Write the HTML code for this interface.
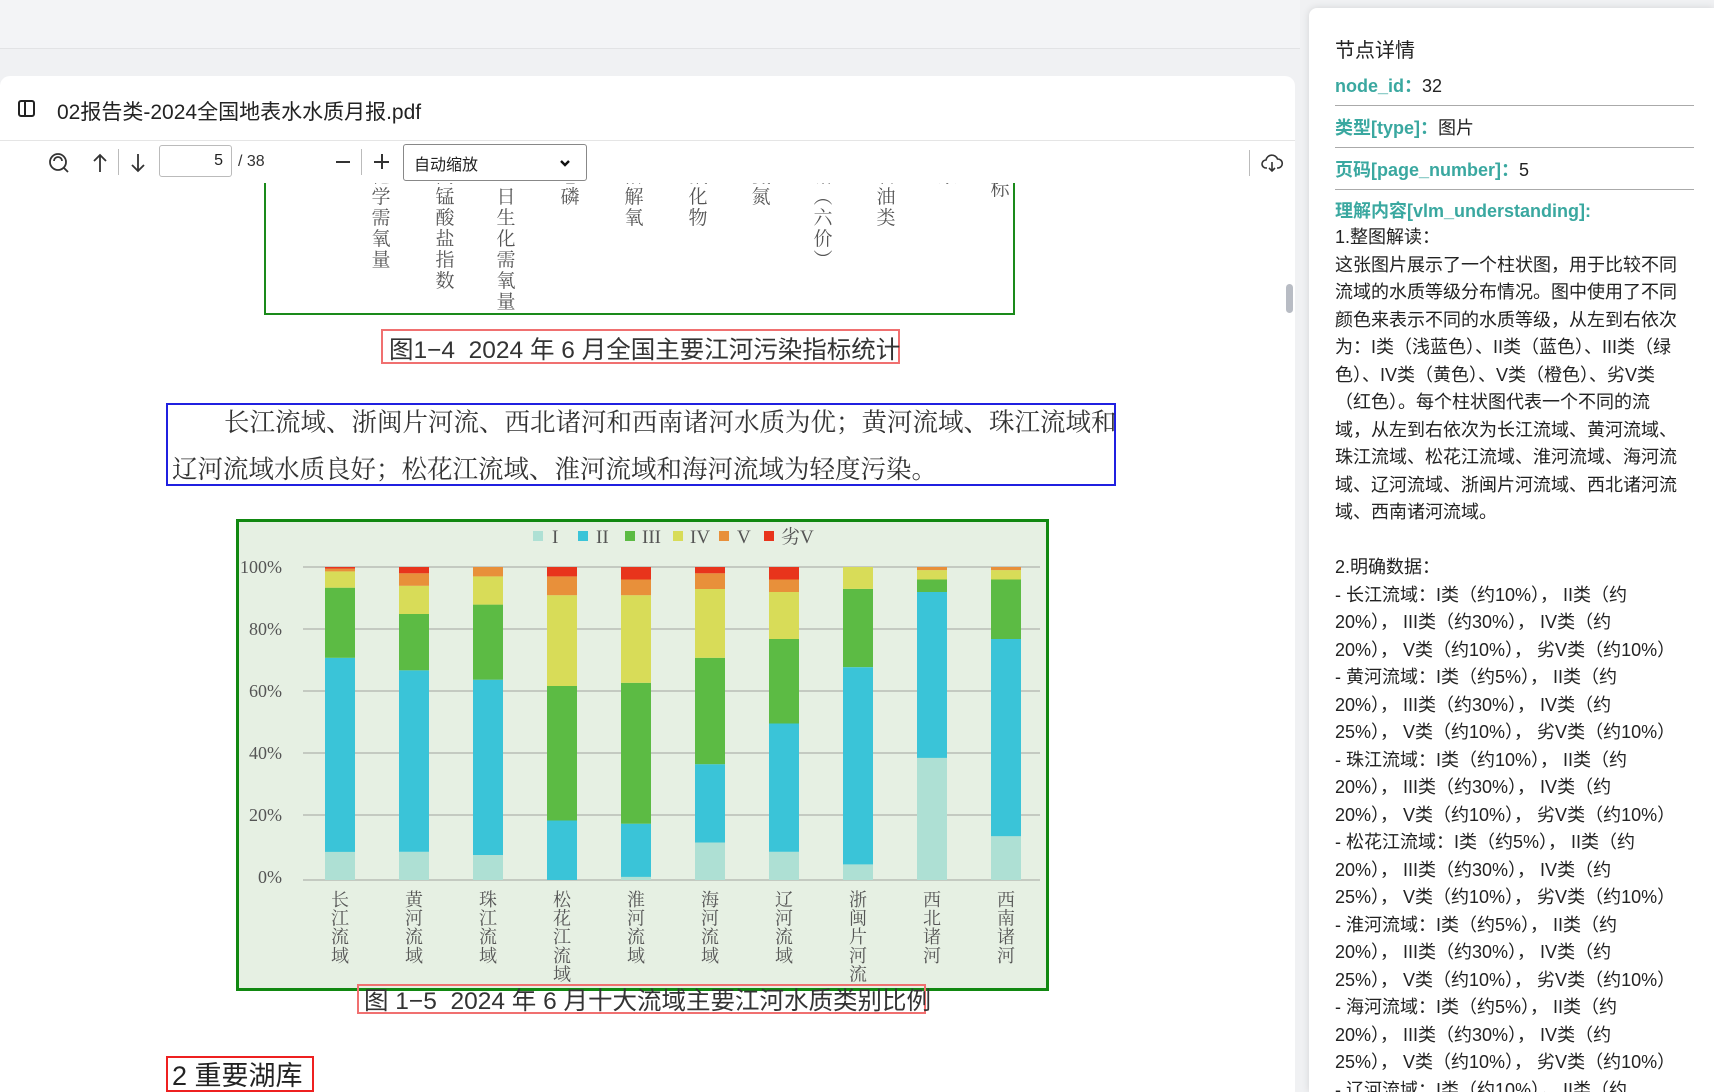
<!DOCTYPE html>
<html style="overflow:hidden;width:1714px;height:1092px"><head><meta charset="utf-8">
<style>
*{margin:0;padding:0;box-sizing:border-box}
body{width:1714px;height:1092px;overflow:hidden;background:#f0f1f3;font-family:"Liberation Sans","Noto Sans CJK SC",sans-serif;position:relative;color:#222}
.abs{position:absolute}
.card{left:0;top:76px;width:1295px;height:1016px;background:#fff;border-top-left-radius:10px;border-top-right-radius:10px}
.serif{font-family:"Liberation Serif","Noto Serif CJK SC",serif}
.vcol{position:absolute;width:24px;text-align:center;font-size:19px;line-height:21px;color:#555;font-family:"Liberation Serif","Noto Serif CJK SC",serif}
.panel{left:1309px;top:8px;width:405px;height:1084px;background:#fff;border-top-left-radius:8px;box-shadow:0 0 8px rgba(0,0,0,.12)}
.pl{position:absolute;left:1335px;font-size:18px;color:#222;white-space:nowrap}
.lbl{color:#3aa8a0;font-weight:bold}
.hr{position:absolute;left:1335px;width:359px;height:1px;background:#aaa}
</style></head><body>
<div class="abs" style="left:0;top:0;width:1300px;height:49px;background:#f3f4f6;border-bottom:1px solid #e2e3e5"></div>
<div class="abs card"></div>
<!-- header -->
<div class="abs" style="left:18px;top:100px;width:17px;height:17px;border:2px solid #222;border-radius:3px"></div>
<div class="abs" style="left:24px;top:100px;width:2px;height:17px;background:#222"></div>
<div class="abs" style="left:57px;top:96px;font-size:21px;color:#222">02报告类-2024全国地表水水质月报.pdf</div>
<div class="abs" style="left:0;top:140px;width:1295px;height:1px;background:#e5e5e5"></div>
<!-- toolbar -->
<svg class="abs" style="left:46px;top:150px" width="26" height="26" viewBox="0 0 26 26" fill="none" stroke="#333" stroke-width="1.8"><circle cx="12" cy="12" r="8"/><path d="M18 18l4 4M8 11a4 4 0 0 1 8 0"/></svg>
<svg class="abs" style="left:90px;top:152px" width="20" height="22" viewBox="0 0 20 22" fill="none" stroke="#333" stroke-width="1.8"><path d="M10 20V3M4 9l6-6 6 6"/></svg>
<div class="abs" style="left:118px;top:149px;width:1px;height:26px;background:#bbb"></div>
<svg class="abs" style="left:128px;top:152px" width="20" height="22" viewBox="0 0 20 22" fill="none" stroke="#333" stroke-width="1.8"><path d="M10 2v17M4 13l6 6 6-6"/></svg>
<div class="abs" style="left:159px;top:145px;width:73px;height:32px;border:1px solid #bbb;border-radius:3px;font-size:16px;text-align:right;padding:6px 8px 0 0">5</div>
<div class="abs" style="left:238px;top:153px;font-size:16px;color:#333">/ 38</div>
<div class="abs" style="left:336px;top:161px;width:14px;height:2px;background:#333"></div>
<div class="abs" style="left:361px;top:149px;width:1px;height:26px;background:#bbb"></div>
<div class="abs" style="left:374px;top:161px;width:15px;height:2px;background:#333"></div>
<div class="abs" style="left:381px;top:154px;width:2px;height:15px;background:#333"></div>
<div class="abs" style="left:403px;top:144px;width:184px;height:37px;border:1px solid #888;border-radius:3px;font-size:16px;padding:6px 0 0 10px">自动缩放</div>
<svg class="abs" style="left:558px;top:157px" width="14" height="12" viewBox="0 0 14 12"><path d="M3 4l4 4 4-4" fill="none" stroke="#111" stroke-width="2.4"/></svg>
<div class="abs" style="left:1249px;top:150px;width:1px;height:26px;background:#bbb"></div>
<svg class="abs" style="left:1260px;top:151px" width="24" height="24" viewBox="0 0 24 24" fill="none" stroke="#333" stroke-width="1.6"><path d="M7 17H6a4 4 0 0 1 0-8 6 6 0 0 1 11.5-1A4.5 4.5 0 0 1 18 17h-1M12 11v9M9 17l3 3 3-3"/></svg>
<div class="abs" style="left:1286px;top:284px;width:7px;height:29px;background:#b8bcc4;border-radius:4px"></div>

<!-- content clip -->
<div class="abs" style="left:0;top:183px;width:1280px;height:132px;overflow:hidden">
 <div class="abs" style="left:264px;top:-20px;width:751px;height:152px;border:2px solid #1a8a1a;border-top:none"></div>
 <div class="vcol" style="left:369px;top:-17px">化<br>学<br>需<br>氧<br>量</div>
 <div class="vcol" style="left:433px;top:-17px">高<br>锰<br>酸<br>盐<br>指<br>数</div>
 <div class="vcol" style="left:494px;top:-17px">五<br>日<br>生<br>化<br>需<br>氧<br>量</div>
 <div class="vcol" style="left:558px;top:-17px">总<br>磷</div>
 <div class="vcol" style="left:622px;top:-17px">溶<br>解<br>氧</div>
 <div class="vcol" style="left:686px;top:-17px">氟<br>化<br>物</div>
 <div class="vcol" style="left:749px;top:-17px">氨<br>氮</div>
 <div class="vcol" style="left:811px;top:-17px">铬<br>︵<br>六<br>价<br>︶</div>
 <div class="vcol" style="left:874px;top:-17px">石<br>油<br>类</div>
 <div class="vcol" style="left:936px;top:-17px">汞</div>
 <div class="vcol" style="left:988px;top:-4px">标</div>
</div>
<div class="abs" style="left:381px;top:329px;width:519px;height:35px;border:2px solid #f07070"></div>
<div class="abs" style="left:389px;top:331px;font-size:24.5px;color:#333;white-space:nowrap">图1−4&nbsp; 2024 年 6 月全国主要江河污染指标统计</div>

<div class="abs" style="left:166px;top:403px;width:950px;height:83px;border:2px solid #2020e0"></div>
<div class="abs serif" style="left:172px;top:399px;width:950px;font-size:25.5px;line-height:47px;color:#333;white-space:nowrap"><div style="padding-left:52px">长江流域、浙闽片河流、西北诸河和西南诸河水质为优；黄河流域、珠江流域和</div><div>辽河流域水质良好；松花江流域、淮河流域和海河流域为轻度污染。</div></div>

<!-- chart -->
<svg class="abs" style="left:236px;top:519px" width="813" height="472" viewBox="236 519 813 472">
<rect x="237.5" y="520.5" width="810" height="469" fill="#e6f0e3" stroke="#118811" stroke-width="3"/>
<g font-family="Liberation Serif,Noto Serif CJK SC,serif" font-size="19" fill="#555">
<rect x="533" y="531" width="10" height="10" fill="#aee0d4"/><text x="552" y="543">I</text>
<rect x="578" y="531" width="10" height="10" fill="#3ac4d8"/><text x="596" y="543">II</text>
<rect x="625" y="531" width="10" height="10" fill="#5cbb44"/><text x="642" y="543">III</text>
<rect x="673" y="531" width="10" height="10" fill="#d8dc58"/><text x="690" y="543">IV</text>
<rect x="719" y="531" width="10" height="10" fill="#e8903a"/><text x="737" y="543">V</text>
<rect x="764" y="531" width="10" height="10" fill="#e8341c"/><text x="781" y="543">劣V</text>
<g text-anchor="end" font-size="18"><text x="282" y="573">100%</text><text x="282" y="635">80%</text><text x="282" y="697">60%</text><text x="282" y="759">40%</text><text x="282" y="821">20%</text><text x="282" y="883">0%</text></g>
</g>
<g stroke="#b8bdb6" stroke-width="1.5"><line x1="303" x2="1040" y1="567" y2="567"/><line x1="303" x2="1040" y1="629" y2="629"/><line x1="303" x2="1040" y1="691" y2="691"/><line x1="303" x2="1040" y1="753" y2="753"/><line x1="303" x2="1040" y1="815" y2="815"/><line x1="303" x2="1040" y1="880" y2="880"/></g>
<g id="bars"></g>
<g font-family="Liberation Serif,Noto Serif CJK SC,serif" font-size="18" fill="#555" text-anchor="middle" id="xl"></g>
</svg>
<script>
var d=[[9,71,93.4,98.6,99.5],[9,67,85,94,98],[8,64,88,97,100],[0,19,62,91,97],[1,18,63,91,96],[12,37,71,93,98],[9,50,77,92,96],[5,68,93,100,100],[39,92,96,99,100],[14,77,96,99,100]];
var c=["#aee0d4","#3ac4d8","#5cbb44","#d8dc58","#e8903a","#e8341c"];
var n=["长江流域","黄河流域","珠江流域","松花江流域","淮河流域","海河流域","辽河流域","浙闽片河流","西北诸河","西南诸河"];
var s="",t="";
for(var i=0;i<10;i++){var x=325+i*74,p=0,v=d[i].concat([100]);
for(var k=0;k<6;k++){var y1=880-3.13*v[k],y0=880-3.13*p;if(v[k]>p)s+='<rect x="'+x+'" y="'+y1.toFixed(1)+'" width="30" height="'+(y0-y1).toFixed(1)+'" fill="'+c[k]+'"/>';p=v[k];}
for(var j=0;j<n[i].length;j++)t+='<text x="'+(x+15)+'" y="'+(906+j*18.6).toFixed(1)+'">'+n[i][j]+'</text>';}
document.getElementById("bars").innerHTML=s;document.getElementById("xl").innerHTML=t;
</script>
<div class="abs" style="left:357px;top:984px;width:569px;height:30px;border:2px solid #f07070;background:transparent"></div>
<div class="abs" style="left:364px;top:982px;font-size:24.5px;color:#333;white-space:nowrap">图 1−5&nbsp; 2024 年 6 月十大流域主要江河水质类别比例</div>
<div class="abs" style="left:166px;top:1056px;width:148px;height:36px;border:2px solid #ee2020"></div>
<div class="abs" style="left:172px;top:1054px;font-size:27px;color:#222;white-space:nowrap">2 重要湖库</div>

<!-- panel -->
<div class="abs panel"></div>
<div class="pl" style="top:34px;font-size:20px">节点详情</div>
<div class="pl" style="top:72px"><span class="lbl">node_id：</span>32</div>
<div class="hr" style="top:105px"></div>
<div class="pl" style="top:114px"><span class="lbl">类型[type]：</span>图片</div>
<div class="hr" style="top:147px"></div>
<div class="pl" style="top:156px"><span class="lbl">页码[page_number]：</span>5</div>
<div class="hr" style="top:189px"></div>
<div class="pl lbl" style="top:197px">理解内容[vlm_understanding]:</div>
<div class="pl" style="top:224px;line-height:27.5px">1.整图解读：<br>这张图片展示了一个柱状图，用于比较不同<br>流域的水质等级分布情况。图中使用了不同<br>颜色来表示不同的水质等级，从左到右依次<br>为：I类（浅蓝色）、II类（蓝色）、III类（绿<br>色）、IV类（黄色）、V类（橙色）、劣V类<br>（红色）。每个柱状图代表一个不同的流<br>域，从左到右依次为长江流域、黄河流域、<br>珠江流域、松花江流域、淮河流域、海河流<br>域、辽河流域、浙闽片河流域、西北诸河流<br>域、西南诸河流域。<br><br>2.明确数据：<br>- 长江流域：I类（约10%）， II类（约<br>20%）， III类（约30%）， IV类（约<br>20%）， V类（约10%）， 劣V类（约10%）<br>- 黄河流域：I类（约5%）， II类（约<br>20%）， III类（约30%）， IV类（约<br>25%）， V类（约10%）， 劣V类（约10%）<br>- 珠江流域：I类（约10%）， II类（约<br>20%）， III类（约30%）， IV类（约<br>20%）， V类（约10%）， 劣V类（约10%）<br>- 松花江流域：I类（约5%）， II类（约<br>20%）， III类（约30%）， IV类（约<br>25%）， V类（约10%）， 劣V类（约10%）<br>- 淮河流域：I类（约5%）， II类（约<br>20%）， III类（约30%）， IV类（约<br>25%）， V类（约10%）， 劣V类（约10%）<br>- 海河流域：I类（约5%）， II类（约<br>20%）， III类（约30%）， IV类（约<br>25%）， V类（约10%）， 劣V类（约10%）<br>- 辽河流域：I类（约10%）， II类（约</div>
</body></html>
